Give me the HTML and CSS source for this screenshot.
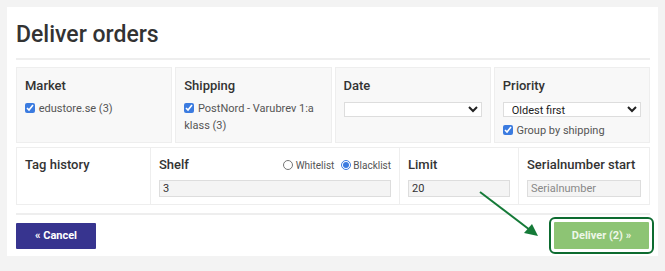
FILE: index.html
```html
<!DOCTYPE html>
<html lang="en">

<head>
    <meta charset="UTF-8">
    <meta name="viewport" content="width=device-width, initial-scale=1.0">
    <title>Deliver orders</title>
    <link rel="stylesheet" href="styles.css">
</head>

<body>
    <div class="panel">
        <h1 class="title">Deliver orders</h1>

        <div class="filters">
            <div class="filter">
                <h3>Market</h3>
                <label class="check"><input type="checkbox" checked> edustore.se (3)</label>
            </div>
            <div class="filter">
                <h3>Shipping</h3>
                <label class="check"><input type="checkbox" checked> PostNord - Varubrev 1:a klass (3)</label>
            </div>
            <div class="filter">
                <h3>Date</h3>
                <select class="select">
                    <option></option>
                </select>
            </div>
            <div class="filter">
                <h3>Priority</h3>
                <select class="select">
                    <option>Oldest first</option>
                </select>
                <label class="check group"><input type="checkbox" checked> Group by shipping</label>
            </div>
        </div>

        <table class="options">
            <tr>
                <td class="tag">
                    <h3>Tag history</h3>
                </td>
                <td class="shelf">
                    <div class="shelfHead">
                        <h3>Shelf</h3>
                        <div class="radios">
                            <label><input type="radio" name="list"> Whitelist</label>
                            <label><input type="radio" name="list" checked> Blacklist</label>
                        </div>
                    </div>
                    <input class="field" type="text" value="3">
                </td>
                <td class="limit">
                    <h3>Limit</h3>
                    <input class="field" type="text" value="20">
                </td>
                <td class="serial">
                    <h3>Serialnumber start</h3>
                    <input class="field" type="text" placeholder="Serialnumber">
                </td>
            </tr>
        </table>

        <div class="actions">
            <button class="btn cancel">&laquo; Cancel</button>
            <button class="btn deliver">Deliver (2) &raquo;</button>
        </div>

        <svg class="arrow" width="70" height="56" viewBox="0 0 70 56">
            <line x1="2" y1="2" x2="52" y2="40" stroke="#157a38" stroke-width="2" />
            <polygon points="60,46 46,43 54,34" fill="#157a38" />
        </svg>
    </div>
</body>

</html>
```

FILE: styles.css
```css
body {
    margin: 0;
    background-color: #f3f3f3;
    padding: 7px;
    font-family: Roboto, "Liberation Sans", sans-serif;
    color: #333;
}

.panel {
    position: relative;
    width: 634px;
    background-color: #fff;
    padding: 0 8px 7px 9px;
}

.title {
    margin: 0;
    padding: 15px 0 10px;
    font-size: 23px;
    font-weight: 500;
    line-height: 26px;
    color: #333;
    border-bottom: 2px solid #eee;
}

h3 {
    margin: 0;
    font-size: 13px;
    font-weight: 500;
    line-height: 16px;
    color: #333;
    white-space: nowrap;
}

.filters {
    display: grid;
    grid-template-columns: repeat(4, 1fr);
    gap: 3px;
    margin-top: 7px;
}

.filter {
    height: 76px;
    box-sizing: border-box;
    padding: 10px 8px 9px;
    background-color: #f8f8f8;
    border: 1px solid #eee;
}

.filter h3 {
    margin-bottom: 6px;
}

.check {
    display: block;
    font-size: 11px;
    line-height: 17px;
    color: #555;
}

.check input {
    width: 10px;
    height: 10px;
    margin: 0 1px 0 0;
    vertical-align: -1px;
    accent-color: #3b7be0;
}

.group {
    margin-top: 5px;
}

.select {
    display: block;
    width: 100%;
    height: 15px;
    margin-top: 8px;
    padding: 0 4px;
    font-family: inherit;
    font-size: 11px;
    color: #222;
    background-color: #fff;
    border: 1px solid #ddd;
    border-radius: 0;
}

.options {
    width: 634px;
    margin-top: 4px;
    border-collapse: collapse;
    border-bottom: 1px solid #eee;
}

.options td {
    height: 57px;
    box-sizing: border-box;
    padding: 9px 8px 7px;
    vertical-align: top;
    border: 1px solid #eee;
    border-bottom: 0;
}

.tag {
    width: 134px;
}

.shelf {
    width: 249px;
}

.limit {
    width: 119px;
}

.shelfHead {
    display: flex;
    justify-content: space-between;
    align-items: center;
}

.radios {
    font-size: 10px;
    color: #555;
    white-space: nowrap;
}

.radios input {
    width: 10px;
    height: 10px;
    margin: 0;
    vertical-align: -1px;
    accent-color: #3b7be0;
}

.radios label + label {
    margin-left: 4px;
}

.field {
    display: block;
    width: 100%;
    height: 17px;
    box-sizing: border-box;
    margin-top: 7px;
    padding: 0 3px;
    font-family: inherit;
    font-size: 11px;
    color: #333;
    background-color: #f4f4f4;
    border: 1px solid #ddd;
}

.field::placeholder {
    color: #888;
}

.actions {
    display: flex;
    justify-content: space-between;
    align-items: center;
    margin-top: 8px;
    padding-top: 7px;
    border-top: 2px solid #eee;
}

.btn {
    height: 26px;
    border: none;
    border-radius: 1px;
    font-family: inherit;
    font-size: 11px;
    font-weight: 700;
    cursor: pointer;
}

.cancel {
    width: 80px;
    background-color: #37348f;
    color: #fff;
}

.deliver {
    width: 95px;
    height: 27px;
    margin-right: 1px;
    background-color: #8dc474;
    color: #eef7e8;
    outline: 2px solid #0d6b30;
    outline-offset: 3px;
}

.arrow {
    position: absolute;
    left: 471px;
    top: 183px;
}
```
